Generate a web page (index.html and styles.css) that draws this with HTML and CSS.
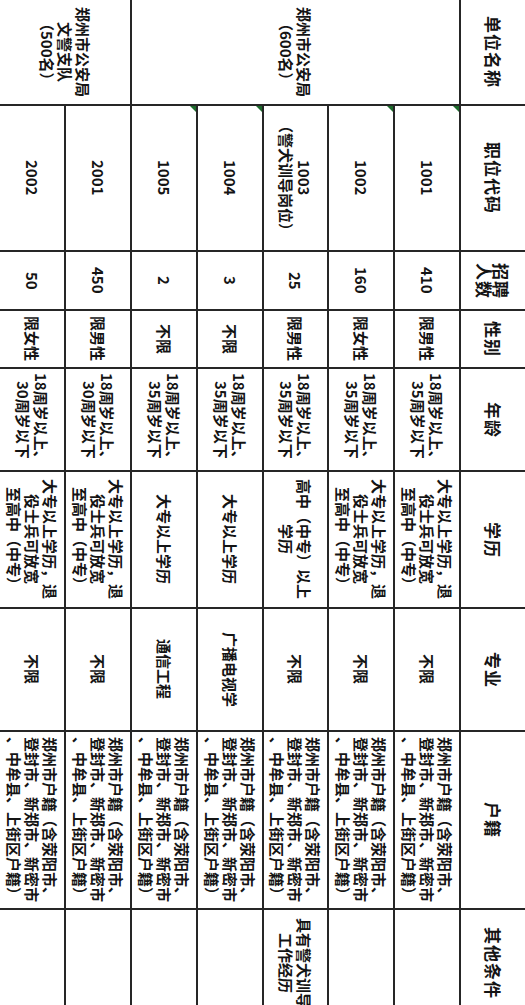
FILE: index.html
```html
<!DOCTYPE html>
<html lang="zh-CN">
<head>
<meta charset="utf-8">
<title>招聘职位表</title>
<link rel="stylesheet" href="styles.css">
</head>
<body>
<div class="page">
<table class="grid">
  <tr class="head">
    <th class="c-unit">单位名称</th>
    <th class="c-code">职位代码</th>
    <th class="c-num">招聘<br>人数</th>
    <th class="c-sex">性别</th>
    <th class="c-age">年龄</th>
    <th class="c-edu">学历</th>
    <th class="c-major">专业</th>
    <th class="c-home">户籍</th>
    <th class="c-other">其他条件</th>
  </tr>
  <tr>
    <td rowspan="5">郑州市公安局<br>（600名）</td>
    <td class="flag">1001</td>
    <td>410</td>
    <td>限男性</td>
    <td>18周岁以上、<br>35周岁以下</td>
    <td>大专以上学历，退<br>役士兵可放宽<br>至高中（中专）</td>
    <td>不限</td>
    <td>郑州市户籍（含荥阳市、<br>登封市、新郑市、新密市<br>、中牟县、上街区户籍）</td>
    <td></td>
  </tr>
  <tr>
    <td class="flag">1002</td>
    <td>160</td>
    <td>限女性</td>
    <td>18周岁以上、<br>35周岁以下</td>
    <td>大专以上学历，退<br>役士兵可放宽<br>至高中（中专）</td>
    <td>不限</td>
    <td>郑州市户籍（含荥阳市、<br>登封市、新郑市、新密市<br>、中牟县、上街区户籍）</td>
    <td></td>
  </tr>
  <tr>
    <td>1003<br>（警犬训导岗位）</td>
    <td>25</td>
    <td>限男性</td>
    <td>18周岁以上、<br>35周岁以下</td>
    <td>高中（中专）以上<br>学历</td>
    <td>不限</td>
    <td>郑州市户籍（含荥阳市、<br>登封市、新郑市、新密市<br>、中牟县、上街区户籍）</td>
    <td>具有警犬训导<br>工作经历</td>
  </tr>
  <tr>
    <td class="flag">1004</td>
    <td>3</td>
    <td>不限</td>
    <td>18周岁以上、<br>35周岁以下</td>
    <td>大专以上学历</td>
    <td>广播电视学</td>
    <td>郑州市户籍（含荥阳市、<br>登封市、新郑市、新密市<br>、中牟县、上街区户籍）</td>
    <td></td>
  </tr>
  <tr>
    <td class="flag">1005</td>
    <td>2</td>
    <td>不限</td>
    <td>18周岁以上、<br>35周岁以下</td>
    <td>大专以上学历</td>
    <td>通信工程</td>
    <td>郑州市户籍（含荥阳市、<br>登封市、新郑市、新密市<br>、中牟县、上街区户籍）</td>
    <td></td>
  </tr>
  <tr>
    <td rowspan="2">郑州市公安局<br>文警支队<br>（500名）</td>
    <td>2001</td>
    <td>450</td>
    <td>限男性</td>
    <td>18周岁以上、<br>30周岁以下</td>
    <td>大专以上学历，退<br>役士兵可放宽<br>至高中（中专）</td>
    <td>不限</td>
    <td>郑州市户籍（含荥阳市、<br>登封市、新郑市、新密市<br>、中牟县、上街区户籍）</td>
    <td></td>
  </tr>
  <tr>
    <td>2002</td>
    <td>50</td>
    <td>限女性</td>
    <td>18周岁以上、<br>30周岁以下</td>
    <td>大专以上学历，退<br>役士兵可放宽<br>至高中（中专）</td>
    <td>不限</td>
    <td>郑州市户籍（含荥阳市、<br>登封市、新郑市、新密市<br>、中牟县、上街区户籍）</td>
    <td></td>
  </tr>
</table>
</div>
</body>
</html>
```
FILE: styles.css
```css
html, body {
  margin: 0;
  padding: 0;
  background: #ffffff;
}

.page {
  width: 525px;
  height: 1005px;
  overflow: hidden;
  display: flex;
  justify-content: flex-end;
  background: #ffffff;
}

.grid {
  writing-mode: vertical-rl;
  text-orientation: sideways;
  border-collapse: collapse;
  border-style: hidden;
  table-layout: fixed;
  inline-size: 1000px;
  block-size: 525px;
  font-family: "Noto Sans CJK SC", "Noto Sans", sans-serif;
  font-weight: 700;
  font-size: 15px;
  line-height: 18px;
  color: #141414;
  flex: none;
}

.grid th,
.grid td {
  border: 2px solid #262626;
  padding: 0;
  text-align: center;
  vertical-align: middle;
  white-space: nowrap;
  block-size: 60px;
}

.grid th {
  font-size: 17px;
  letter-spacing: 1px;
  line-height: 17px;
}

.c-unit { inline-size: 104px; }
.c-code { inline-size: 144px; }
.c-num { inline-size: 57px; }
.c-sex { inline-size: 56px; }
.c-age { inline-size: 101px; }
.c-edu { inline-size: 135px; }
.c-major { inline-size: 121px; }
.c-home { inline-size: 176px; }
.c-other { inline-size: 106px; }

.flag {
  position: relative;
}

.flag::after {
  content: "";
  position: absolute;
  top: 0;
  right: 0;
  width: 0;
  height: 0;
  border-top: 6px solid #1d6b2c;
  border-left: 6px solid transparent;
}
```
